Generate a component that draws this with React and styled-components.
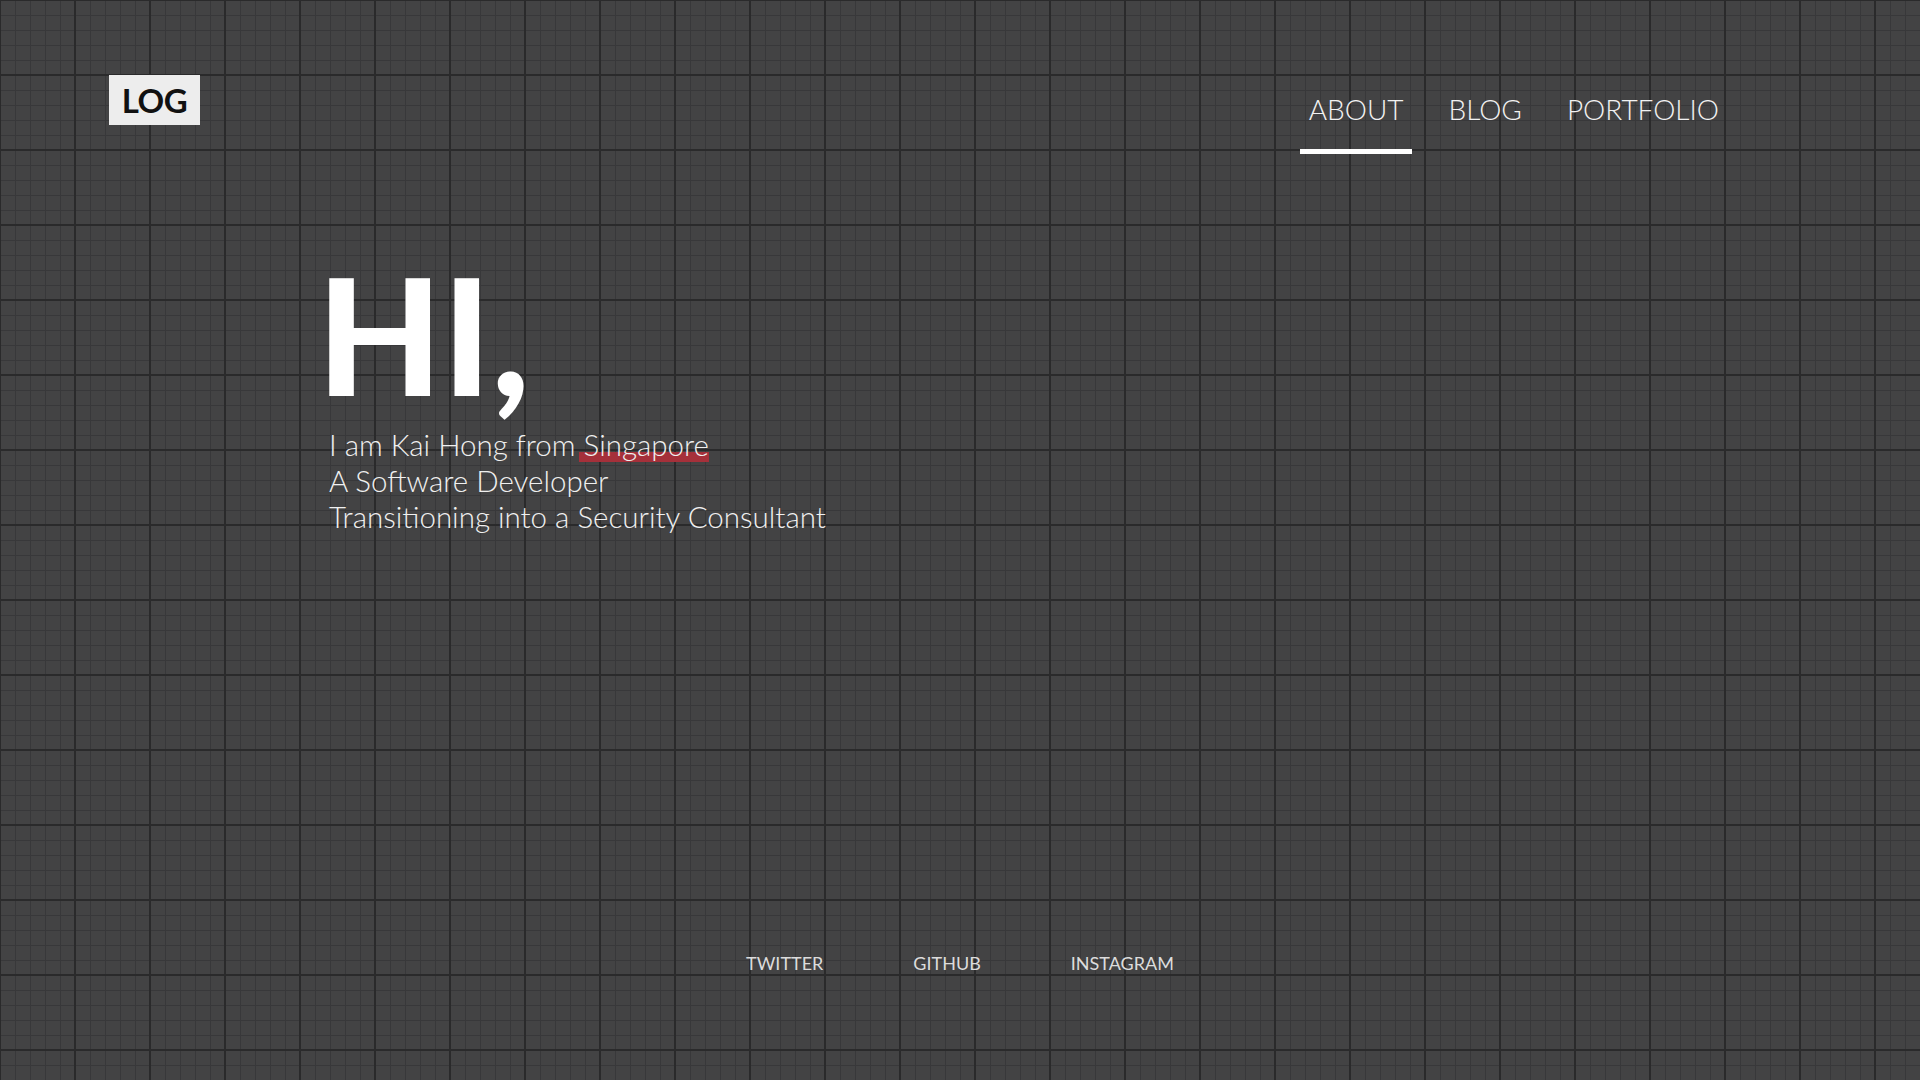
import React from 'react';
import styled, { createGlobalStyle } from 'styled-components';

const GlobalStyle = createGlobalStyle`
  html, body {
    margin: 0;
    padding: 0;
  }
  body {
    font-family: Lato, "Liberation Sans", sans-serif;
    background-color: #434344;
    background-image:
      linear-gradient(#2a2a2b 2px, transparent 2px),
      linear-gradient(90deg, #2a2a2b 2px, transparent 2px),
      linear-gradient(#38383a 1px, transparent 1px),
      linear-gradient(90deg, #38383a 1px, transparent 1px);
    background-size: 75px 75px, 75px 75px, 15px 15px, 15px 15px;
    background-position: -1px -1px, -1px -1px, 0 0, 0 0;
  }
`;

const lightFont = `"Lato Light", Lato, "Liberation Sans", sans-serif`;

const Page = styled.div`
  min-height: 100vh;
  display: flex;
  flex-direction: column;
`;

const Header = styled.header`
  display: flex;
  justify-content: space-between;
  align-items: flex-start;
  padding: 75px 192px 0 109px;
`;

const Logo = styled.a`
  display: flex;
  align-items: center;
  justify-content: center;
  width: 91px;
  height: 50px;
  box-sizing: border-box;
  background: #ededed;
  color: #111;
  font-size: 33px;
  font-weight: 700;
  text-decoration: none;
  letter-spacing: -0.5px;
`;

const Nav = styled.nav`
  display: flex;
  gap: 27px;
  margin-top: 18px;
`;

const NavItem = styled.a`
  display: block;
  padding: 0 9px 22px;
  font-family: ${lightFont};
  font-size: 28px;
  line-height: 1.2;
  font-weight: 300;
  color: #f2f2f2;
  text-decoration: none;
  border-bottom: 5px solid ${props => (props.active ? '#ffffff' : 'transparent')};
`;

const Main = styled.main`
  flex: 1;
  padding: 99px 0 0 329px;
`;

const Greeting = styled.h1`
  margin: 0 0 12px -12px;
  font-size: 162px;
  line-height: 1;
  font-weight: 900;
  color: #ffffff;
`;

const Intro = styled.p`
  margin: 0;
  font-family: ${lightFont};
  font-size: 29.5px;
  line-height: 36px;
  font-weight: 300;
  color: #f0f0f0;
`;

const Highlight = styled.span`
  padding: 0 0 0 5px;
  margin-left: -5px;
  background: linear-gradient(to top, #a5303a 10px, transparent 10px);
`;

const Footer = styled.footer`
  display: flex;
  justify-content: center;
  gap: 90px;
  padding-bottom: 105px;
`;

const SocialLink = styled.a`
  font-size: 18px;
  line-height: 1.2;
  font-weight: 400;
  color: #dcdcdc;
  text-decoration: none;
`;

const navItems = [
  { label: 'ABOUT', active: true },
  { label: 'BLOG' },
  { label: 'PORTFOLIO' },
];

const socials = ['TWITTER', 'GITHUB', 'INSTAGRAM'];

const App = () => {
  return (
    <Page>
      <GlobalStyle />
      <Header>
        <Logo href="#">LOG</Logo>
        <Nav>
          {navItems.map(item => (
            <NavItem key={item.label} href="#" active={item.active}>
              {item.label}
            </NavItem>
          ))}
        </Nav>
      </Header>

      <Main>
        <Greeting>HI,</Greeting>
        <Intro>
          I am Kai Hong from <Highlight>Singapore</Highlight>
          <br />
          A Software Developer
          <br />
          Transitioning into a Security Consultant
        </Intro>
      </Main>

      <Footer>
        {socials.map(name => (
          <SocialLink key={name} href="#">{name}</SocialLink>
        ))}
      </Footer>
    </Page>
  );
};

export default App;
